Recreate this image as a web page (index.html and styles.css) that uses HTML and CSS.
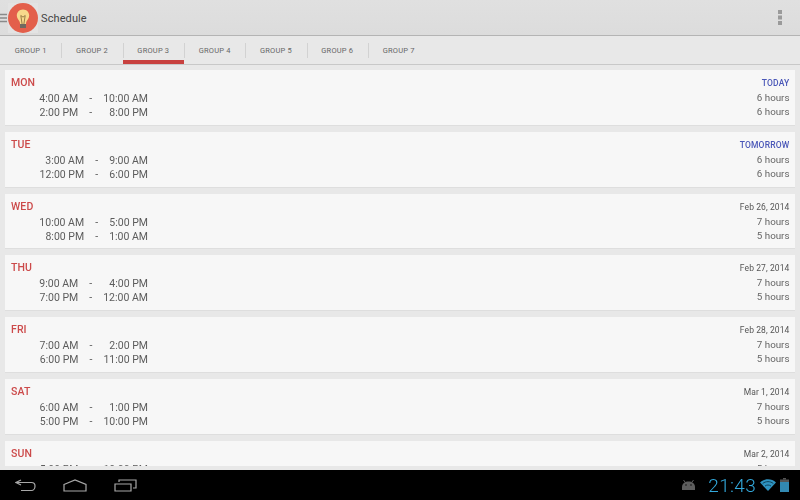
FILE: index.html
```html
<!DOCTYPE html>
<html lang="en">
<head>
<meta charset="utf-8">
<title>Schedule</title>
<link rel="stylesheet" href="styles.css">
</head>
<body>
<div class="app">
  <header class="actionbar">
    <svg class="burger" width="7" height="10" viewBox="0 0 7 10"><path d="M0 1.500h7M0 5h7M0 8.500h7" stroke="#8a8a8a" stroke-width="1.4"/></svg>
    <div class="logo">
      <svg width="30" height="30" viewBox="0 0 30 30">
        <circle cx="15" cy="15" r="15" fill="#e35f4b"/>
        <g transform="translate(0 3)">
          <path d="M15 3.500c-3.800 0-6.200 2.800-6.200 6 0 2.600 1.700 4.200 2.500 5.600.6 1 .7 1.900.8 3h5.800c.1-1.100.2-2 .8-3 .8-1.400 2.500-3 2.500-5.600 0-3.200-2.400-6-6.200-6z" fill="#f7da8c"/>
          <path d="M12.800 9.500l1.300 8.500M17.200 9.500L15.900 18M12.800 9.500l2.200 1.600 2.200-1.600" fill="none" stroke="#8d7440" stroke-width=".9"/>
          <rect x="12" y="18" width="6" height="4" fill="#6f6a60"/>
        </g>
      </svg>
    </div>
    <h1 class="title">Schedule</h1>
    <svg class="overflow" width="4" height="15" viewBox="0 0 4 15"><path d="M0 0h4v4H0zM0 5.500h4v4H0zM0 11h4v4H0z" fill="#9a9a9a"/></svg>
  </header>
  <nav class="tabs">
    <div class="tab">GROUP 1</div>
    <div class="tab">GROUP 2</div>
    <div class="tab active">GROUP 3</div>
    <div class="tab">GROUP 4</div>
    <div class="tab">GROUP 5</div>
    <div class="tab">GROUP 6</div>
    <div class="tab">GROUP 7</div>
  </nav>
  <main class="list">
    <section class="card">
      <div class="head"><span class="day">MON</span><span class="date rel">TODAY</span></div>
      <div class="body">
        <div class="times"><span>4:00 AM</span><span class="dash">-</span><span>10:00 AM</span><span>2:00 PM</span><span class="dash">-</span><span>8:00 PM</span></div>
        <div class="hours"><span>6 hours</span><span>6 hours</span></div>
      </div>
    </section>
    <section class="card">
      <div class="head"><span class="day">TUE</span><span class="date rel">TOMORROW</span></div>
      <div class="body">
        <div class="times"><span>3:00 AM</span><span class="dash">-</span><span>9:00 AM</span><span>12:00 PM</span><span class="dash">-</span><span>6:00 PM</span></div>
        <div class="hours"><span>6 hours</span><span>6 hours</span></div>
      </div>
    </section>
    <section class="card">
      <div class="head"><span class="day">WED</span><span class="date">Feb 26, 2014</span></div>
      <div class="body">
        <div class="times"><span>10:00 AM</span><span class="dash">-</span><span>5:00 PM</span><span>8:00 PM</span><span class="dash">-</span><span>1:00 AM</span></div>
        <div class="hours"><span>7 hours</span><span>5 hours</span></div>
      </div>
    </section>
    <section class="card">
      <div class="head"><span class="day">THU</span><span class="date">Feb 27, 2014</span></div>
      <div class="body">
        <div class="times"><span>9:00 AM</span><span class="dash">-</span><span>4:00 PM</span><span>7:00 PM</span><span class="dash">-</span><span>12:00 AM</span></div>
        <div class="hours"><span>7 hours</span><span>5 hours</span></div>
      </div>
    </section>
    <section class="card">
      <div class="head"><span class="day">FRI</span><span class="date">Feb 28, 2014</span></div>
      <div class="body">
        <div class="times"><span>7:00 AM</span><span class="dash">-</span><span>2:00 PM</span><span>6:00 PM</span><span class="dash">-</span><span>11:00 PM</span></div>
        <div class="hours"><span>7 hours</span><span>5 hours</span></div>
      </div>
    </section>
    <section class="card">
      <div class="head"><span class="day">SAT</span><span class="date">Mar 1, 2014</span></div>
      <div class="body">
        <div class="times"><span>6:00 AM</span><span class="dash">-</span><span>1:00 PM</span><span>5:00 PM</span><span class="dash">-</span><span>10:00 PM</span></div>
        <div class="hours"><span>7 hours</span><span>5 hours</span></div>
      </div>
    </section>
    <section class="card">
      <div class="head"><span class="day">SUN</span><span class="date">Mar 2, 2014</span></div>
      <div class="body">
        <div class="times"><span>5:00 PM</span><span class="dash">-</span><span>10:00 PM</span></div>
        <div class="hours"><span>5 hours</span></div>
      </div>
    </section>
  </main>
  <footer class="navbar">
    <div class="navkeys">
      <svg width="21" height="13" viewBox="0 0 21 13"><path d="M6 1L1 3.500 6 6M1 3.500h15.500c2 0 3.500 1 3.500 3.500s-1.500 4.500-3.500 4.500H6" fill="none" stroke="#a8a8a8" stroke-width="1.200"/></svg>
      <svg width="24" height="13" viewBox="0 0 24 13"><path d="M1 5.500L12 1l11 4.500V12H1z" fill="none" stroke="#a8a8a8" stroke-width="1.200"/></svg>
      <svg width="23" height="13" viewBox="0 0 23 13"><path d="M1 5h16v7H1zM5 3V1h17v8h-3" fill="none" stroke="#a8a8a8" stroke-width="1.200"/></svg>
    </div>
    <div class="status">
      <svg class="droid" width="15" height="11" viewBox="0 0 15 11"><path d="M1 10V7C1 3.500 4 1.500 7.500 1.500S14 3.500 14 7v3z" fill="#5e5e5e"/><path d="M4 2L2.500 0M11 2l1.500-2" stroke="#5e5e5e"/><circle cx="5" cy="5" r=".8" fill="#111"/><circle cx="10" cy="5" r=".8" fill="#111"/></svg>
      <span class="clock">21:43</span>
      <svg width="16" height="12" viewBox="0 0 16 12"><path d="M0 3.500C4.500-.8 11.500-.8 16 3.500L8 12z" fill="#2f93c0"/><path d="M2.700 4.500c3-2.500 7.600-2.500 10.600 0M5 7c1.800-1.300 4.200-1.300 6 0" fill="none" stroke="#0a3a50" stroke-width=".9"/></svg>
      <svg width="9" height="14" viewBox="0 0 9 14"><path d="M3 0h3v1.500H3z" fill="#555"/><path d="M0 1.500h9V4H0z" fill="#555"/><path d="M0 4h9v10H0z" fill="#3289b2"/></svg>
    </div>
  </footer>
</div>
</body>
</html>
```
FILE: styles.css
```css
* { box-sizing: border-box; }
html, body { margin: 0; padding: 0; }
body { width: 800px; height: 500px; overflow: hidden; font-family: Roboto, sans-serif; background: #e8e8e8; }
.app { display: flex; flex-direction: column; height: 500px; filter: blur(.3px); }

.actionbar { height: 36px; flex: none; display: flex; align-items: center; background: linear-gradient(#e0e0e0, #dcdcdc); border-bottom: 1px solid #b4b4b4; }
.burger { flex: none; margin-right: 1px; margin-top: 1px; }
.logo { width: 30px; height: 30px; flex: none; background: #e3e3e3; }
.logo svg { display: block; }
.title { margin: 1px 0 0 3px; font-size: 11px; font-weight: 400; color: #444; flex: 1; letter-spacing: .1px; }
.overflow { flex: none; margin-right: 18px; }

.tabs { height: 29px; flex: none; display: flex; background: #e8e8e8; border-bottom: 1px solid #c8c8c8; }
.tab { width: 61.33px; height: 28px; display: flex; align-items: center; justify-content: center; font-size: 7.500px; font-weight: 400; letter-spacing: .2px; color: #666; position: relative; }
.tab + .tab::before { content: ""; position: absolute; left: 0; top: 7px; height: 15px; width: 1px; background: #d2d2d2; }
.tab.active { border-bottom: 4px solid #c8413f; padding-top: 4px; }

.list { flex: 1; min-height: 0; overflow: hidden; margin-bottom: 4px; padding: 5px 5px 0; display: flex; flex-direction: column; gap: 6px; }
.card { flex: none; height: 55.800px; background: #f7f7f7; border-bottom: 1px solid #dedede; padding: 5px 5.500px 0 6px; }
.head { display: flex; justify-content: space-between; align-items: center; height: 15px; }
.day { font-size: 10.500px; font-weight: 500; color: #cc4a4a; letter-spacing: .1px; }
.date { font-size: 8.500px; color: #555; letter-spacing: .1px; padding-top: 1px; }
.rel { font-weight: 500; color: #4a57b8; letter-spacing: .2px; }
.body { display: flex; justify-content: space-between; padding-top: 2px; }
.times { width: 137px; display: grid; grid-template-columns: auto auto auto; justify-content: end; column-gap: 11px; justify-items: end; font-size: 10.500px; line-height: 14px; color: #5c5c5c; }
.dash { width: 3px; }
.hours { display: flex; flex-direction: column; align-items: flex-end; font-size: 9.800px; line-height: 14px; color: #666; margin-top: -1px; }

.navbar { height: 30px; flex: none; background: #000; display: flex; align-items: center; justify-content: space-between; }
.navkeys { display: flex; align-items: center; gap: 27px; padding-left: 15px; }
.status { display: flex; align-items: center; gap: 4px; padding-right: 11px; }
.droid { margin-right: 8px; }
.clock { font-size: 19px; color: #33a9dc; font-weight: 300; letter-spacing: .3px; }
```
